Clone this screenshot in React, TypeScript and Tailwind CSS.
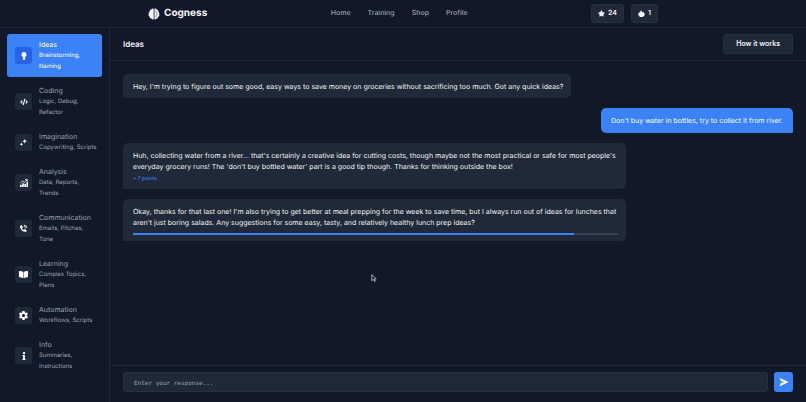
import React, { ReactNode } from "react";
import { FaBookOpen, FaCode, FaInfo, FaStar } from "react-icons/fa";
import { IoMdSettings } from "react-icons/io";
import { BiSolidPhoneCall } from "react-icons/bi";

const BrainIcon = () => (
  <svg viewBox="0 0 24 24" className="h-3 w-3" fill="currentColor">
    <path d="M11.4 1.500C9.600 .5 7.200 1.200 6.500 3.200 4.300 3.600 3 5.500 3.300 7.600 1.500 8.700 .8 10.800 1.500 12.500 .8 14.500 1.600 16.600 3.300 17.500 3.500 19.700 5 21 7 21.200 8 23 10 23.300 11.400 22.500Z" />
    <path d="M12.900 1.500C14.400 .5 16.800 1.200 17.500 3.200 19.700 3.600 21 5.500 20.700 7.600 22.500 8.700 23.200 10.800 22.500 12.500 23.200 14.500 22.400 16.600 20.700 17.500 20.500 19.700 19 21 17 21.200 16 23 14 23.300 12.900 22.500Z" />
    <path
      d="M16 5v4l3 2.500M16 19v-3.500l3-2"
      fill="none"
      stroke="#111827"
      strokeWidth="1.200"
      opacity="0.7"
    />
  </svg>
);

const BulbIcon = () => (
  <svg viewBox="0 0 24 24" className="h-2 w-2" fill="currentColor">
    <path d="M12 0a7.500 7.500 0 0 1 7.500 7.500c0 3.500-2.500 5-3.500 8.500H8C7 12.500 4.500 11 4.500 7.500A7.500 7.500 0 0 1 12 0zM8.500 16.500h7V21L14 24h-4l-1.500-3z" />
  </svg>
);

const SparklesIcon = () => (
  <svg viewBox="0 0 24 24" className="h-[7px] w-[7px]" fill="currentColor">
    <path d="M16 0l2.500 5.500L24 8l-5.500 2.500L16 16l-2.500-5.500L8 8l5.500-2.500zM5 12l2 4 4 2-4 2-2 4-2-4-4-2 4-2z" />
  </svg>
);

const GrowthIcon = () => (
  <svg viewBox="0 0 24 24" className="h-2 w-2" fill="currentColor">
    <path d="M0 17h5v7H0zM6.500 13h5v11h-5zM13 14h5v10h-5zM19.500 9H24v15h-4.500z" />
    <path d="M1 12l7-6 5 4 8-7M15 2h7v6" fill="none" stroke="currentColor" strokeWidth="2.500" />
  </svg>
);

const FlameIcon = () => (
  <svg viewBox="0 0 24 24" className="h-[7px] w-[7px]" fill="currentColor">
    <path d="M11 0c1 4 3 6 5 8l2-1c3 2 5 5 5 8 0 5-5 9-11 9S1 20 1 15c0-4 3-6 5-8 2-2 4-4 5-7z" />
  </svg>
);

const SendIcon = () => (
  <svg viewBox="0 0 24 24" className="h-[10px] w-[10px]" fill="currentColor">
    <path d="M1 1.500l22 10.500L1 22.500 5 14l9-2-9-2z" />
  </svg>
);

type CategoryProps = {
  icon: ReactNode;
  title: string;
  description: string;
  active?: boolean;
};

const Category = ({ icon, title, description, active }: CategoryProps) => {
  return (
    <a
      href="#"
      className={
        active
          ? "flex items-center gap-[7px] rounded-[3px] bg-[#3b82f6] py-[5px] pr-[5px] pl-2 text-white"
          : "flex items-center gap-[7px] rounded-[3px] py-[5px] pr-[5px] pl-2 text-[#9ca3af]"
      }
    >
      <span
        className={
          active
            ? "flex h-[17px] w-[17px] shrink-0 items-center justify-center rounded-[3px] bg-[#2563eb] text-white"
            : "flex h-[17px] w-[17px] shrink-0 items-center justify-center rounded-[3px] bg-[#1f2937] text-white"
        }
      >
        {icon}
      </span>
      <span className="flex flex-col leading-[11px]">
        <span className="text-[7px]">{title}</span>
        <span className="text-[6px]">{description}</span>
      </span>
    </a>
  );
};

type MessageProps = {
  own?: boolean;
  children: ReactNode;
};

const Message = ({ own, children }: MessageProps) => {
  return (
    <div
      className={
        own
          ? "max-w-3/4 self-end rounded-[5px] rounded-br-[1px] bg-[#3b82f6] px-[10px] py-[7px] text-white"
          : "max-w-3/4 self-start rounded-[5px] rounded-bl-[1px] bg-[#1f2937] pt-[7px] pr-2 pb-[6px] pl-[10px] text-[#f3f4f6]"
      }
    >
      {children}
    </div>
  );
};

const Header = () => {
  return (
    <header className="border-b border-[#1f2937]">
      <div className="mx-auto flex h-[27px] w-full max-w-[510px] items-center justify-between">
        <a href="#" className="flex items-center gap-1 text-[10px] font-bold text-[#f3f4f6]">
          <BrainIcon />
          Cogness
        </a>
        <nav className="flex gap-[17px] text-[7px] font-medium text-[#9ca3af]">
          <a href="#">Home</a>
          <a href="#">Training</a>
          <a href="#">Shop</a>
          <a href="#">Profile</a>
        </nav>
        <div className="flex gap-[7px] text-[7px] font-semibold text-[#f3f4f6]">
          <span className="flex h-[19px] items-center gap-[3px] rounded-[3px] border border-[#263040] bg-[#1f2937] px-[6px]">
            <FaStar className="h-[7px] w-[7px]" />
            24
          </span>
          <span className="flex h-[19px] items-center gap-[3px] rounded-[3px] border border-[#263040] bg-[#1f2937] px-[6px]">
            <FlameIcon />1
          </span>
        </div>
      </div>
    </header>
  );
};

const Sidebar = () => {
  return (
    <aside className="flex w-[110px] shrink-0 flex-col gap-[3px] border-r border-[#1f2937] px-[7px] pt-[6px]">
      <Category active icon={<BulbIcon />} title="Ideas" description="Brainstorming, Naming" />
      <Category icon={<FaCode className="h-2 w-2" />} title="Coding" description="Logic, Debug, Refactor" />
      <Category icon={<SparklesIcon />} title="Imagination" description="Copywriting, Scripts" />
      <Category icon={<GrowthIcon />} title="Analysis" description="Data, Reports, Trends" />
      <Category icon={<BiSolidPhoneCall className="h-[9px] w-[9px]" />} title="Communication" description="Emails, Pitches, Tone" />
      <Category icon={<FaBookOpen className="h-[9px] w-[9px]" />} title="Learning" description="Complex Topics, Plans" />
      <Category icon={<IoMdSettings className="h-[11px] w-[11px]" />} title="Automation" description="Workflows, Scripts" />
      <Category icon={<FaInfo className="h-2 w-2" />} title="Info" description="Summaries, Instructions" />
    </aside>
  );
};

const App = () => {
  return (
    <div className="relative flex h-screen flex-col bg-[#111827] font-['Inter',sans-serif] text-[#f3f4f6] [text-rendering:geometricPrecision]">
      <Header />
      <div className="flex min-h-0 flex-1">
        <Sidebar />
        <main className="flex min-w-0 flex-1 flex-col">
          <div className="flex items-center justify-between border-b border-[#1f2937] px-[13px] py-[6px]">
            <h1 className="text-[8px] font-semibold">Ideas</h1>
            <button className="h-5 rounded-[3px] border border-[#263040] bg-[#1f2937] px-3 text-[7px] font-semibold">
              How it works
            </button>
          </div>

          <div className="flex flex-1 flex-col gap-[10px] overflow-hidden p-[13px] text-[7px] leading-[11px]">
            <Message>
              Hey, I'm trying to figure out some good, easy ways to save money on groceries without sacrificing too
              much. Got any quick ideas?
            </Message>
            <Message own>Don't buy water in bottles, try to collect it from river.</Message>
            <Message>
              Huh, collecting water from a river... that's certainly a creative idea for cutting costs, though maybe
              not the most practical or safe for most people's everyday grocery runs! The 'don't buy bottled water'
              part is a good tip though. Thanks for thinking outside the box!
              <p className="mt-[3px] text-[5px] leading-[8px] font-medium text-[#3b82f6]">+ 7 points</p>
            </Message>
            <Message>
              Okay, thanks for that last one! I'm also trying to get better at meal prepping for the week to save
              time, but I always run out of ideas for lunches that aren't just boring salads. Any suggestions for some
              easy, tasty, and relatively healthy lunch prep ideas?
              <div className="mt-[5px] h-[2px] bg-[#374151]">
                <div className="h-full w-[91%] bg-[#3b82f6]" />
              </div>
            </Message>
          </div>

          <form className="flex gap-[6px] border-t border-[#1f2937] px-[13px] pt-[6px] pb-[10px]">
            <input
              type="text"
              aria-label="Your response"
              placeholder="Enter your response..."
              className="h-5 min-w-0 flex-1 rounded-[3px] border border-[#263040] bg-[#1f2937] px-[10px] font-['DejaVu_Sans_Mono',monospace] text-[6px] placeholder:text-[#9ca3af]"
            />
            <button
              type="button"
              aria-label="Send"
              className="flex h-5 w-[19px] items-center justify-center rounded-[3px] bg-[#3b82f6] text-white"
            >
              <SendIcon />
            </button>
          </form>
        </main>
      </div>

      {/* mouse pointer */}
      <svg viewBox="0 0 12 18" className="absolute top-[274px] left-[371px] h-2 w-[6px]">
        <path d="M1 1v14l3.500-3 2.500 5 2-1-2.500-5H11z" fill="#111827" stroke="#e5e7eb" strokeWidth="1.500" />
      </svg>
    </div>
  );
};

export default App;
